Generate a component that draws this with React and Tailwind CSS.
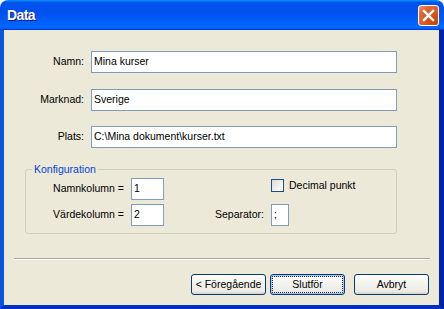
import React from 'react';

const FONT = { fontFamily: '"Liberation Sans", Arial, sans-serif' };

function TextBox({ value, className = '' }) {
  return (
    <div
      className={`h-[22px] border border-[#7f9db9] bg-white flex items-center pl-[2px] text-[10.5px] text-black ${className}`}
    >
      {value}
    </div>
  );
}

function Button({ children, isDefault }) {
  return (
    <button
      className={`w-[75px] h-[21px] rounded-[3px] border border-[#003c74] bg-[linear-gradient(to_bottom,#ffffff_0%,#f4f3ee_40%,#ecebe6_85%,#d6d0c5_100%)] text-[10.5px] text-black flex items-center justify-center p-[1px] ${
        isDefault ? 'shadow-[inset_0_0_0_1px_#a9c2f7,inset_0_0_0_2px_#cee0fc]' : ''
      }`}
    >
      {isDefault ? (
        <span className="w-full h-full border border-dotted border-[#333] flex items-center justify-center">
          {children}
        </span>
      ) : (
        children
      )}
    </button>
  );
}

export default function App() {
  return (
    <div className="w-[444px] h-[309px] bg-white flex flex-col" style={FONT}>
      {/* Titelrad */}
      <div className="h-[30px] shrink-0 rounded-t-[8px] bg-[linear-gradient(to_bottom,#0997ff_0%,#0053ee_8%,#0050ee_40%,#0066ff_88%,#0066ff_93%,#005bff_95%,#003dd7_96%,#003dd7_100%)] flex items-center justify-between pl-[7px] pr-[5px]">
        <span className="text-white font-bold text-[14px] tracking-[-0.6px] [text-shadow:1px_1px_#0f1089]">Data</span>
        <button className="w-[21px] h-[21px] rounded-[3px] border border-white bg-[radial-gradient(circle_at_85%_85%,#c84400_0%,#dc5a27_50%,#e06a3a_75%,#f0a080_100%)] flex items-center justify-center">
          <svg width="19" height="19" viewBox="0 0 19 19">
            <path d="M5 5 L14 14 M14 5 L5 14" stroke="#fff" strokeWidth="2.4" strokeLinecap="square" />
          </svg>
        </button>
      </div>

      {/* Innehåll */}
      <div className="flex-1 flex flex-col bg-[#ece9d8] border-l-[4px] border-l-[#0855dd] border-r-[5px] border-r-[#0021a8] border-b-[4px] border-b-[#0030c0]">
        <div className="flex flex-col pt-[21px] text-[10.5px] text-black">
          <div className="flex items-center">
            <span className="w-[80px] text-right">Namn:</span>
            <TextBox value="Mina kurser" className="ml-[7px] w-[306px]" />
          </div>
          <div className="flex items-center mt-[16px]">
            <span className="w-[80px] text-right">Marknad:</span>
            <TextBox value="Sverige" className="ml-[7px] w-[306px]" />
          </div>
          <div className="flex items-center mt-[15px]">
            <span className="w-[80px] text-right">Plats:</span>
            <TextBox value="C:\Mina dokument\kurser.txt" className="ml-[7px] w-[306px]" />
          </div>
        </div>

        {/* Konfiguration */}
        <fieldset className="mt-[14px] ml-[21px] w-[372px] border border-[#d0d0bf] rounded-[3px] pt-[2px] pb-[7px] text-[10.5px] text-black">
          <legend className="ml-[6px] px-[2px] leading-[14px] text-[#0046d5]">Konfiguration</legend>
          <div className="grid grid-cols-[98px_33px_93px_auto] gap-x-[7px] gap-y-[4px] items-center">
            <span className="text-right">Namnkolumn =</span>
            <TextBox value="1" />
            <span />
            <div className="flex items-center gap-[5px] self-start mt-[1px]">
              <span className="w-[13px] h-[13px] border border-[#1c5180] bg-[linear-gradient(135deg,#dcdcd7,#ffffff)]" />
              <span className="leading-[13px]">Decimal punkt</span>
            </div>
            <span className="text-right">Värdekolumn =</span>
            <TextBox value="2" />
            <span className="text-right">Separator:</span>
            <TextBox value=";" className="w-[18px]" />
          </div>
        </fieldset>

        <div className="mt-[24px] ml-[10px] mr-[9px] h-[2px] border-t border-t-[#aca899] border-b border-b-white" />

        <div className="mt-[14px] flex justify-end pr-[10px]">
          <Button>&lt; Föregående</Button>
          <div className="ml-[4px]">
            <Button isDefault>Slutför</Button>
          </div>
          <div className="ml-[9px]">
            <Button>Avbryt</Button>
          </div>
        </div>
      </div>
    </div>
  );
}
